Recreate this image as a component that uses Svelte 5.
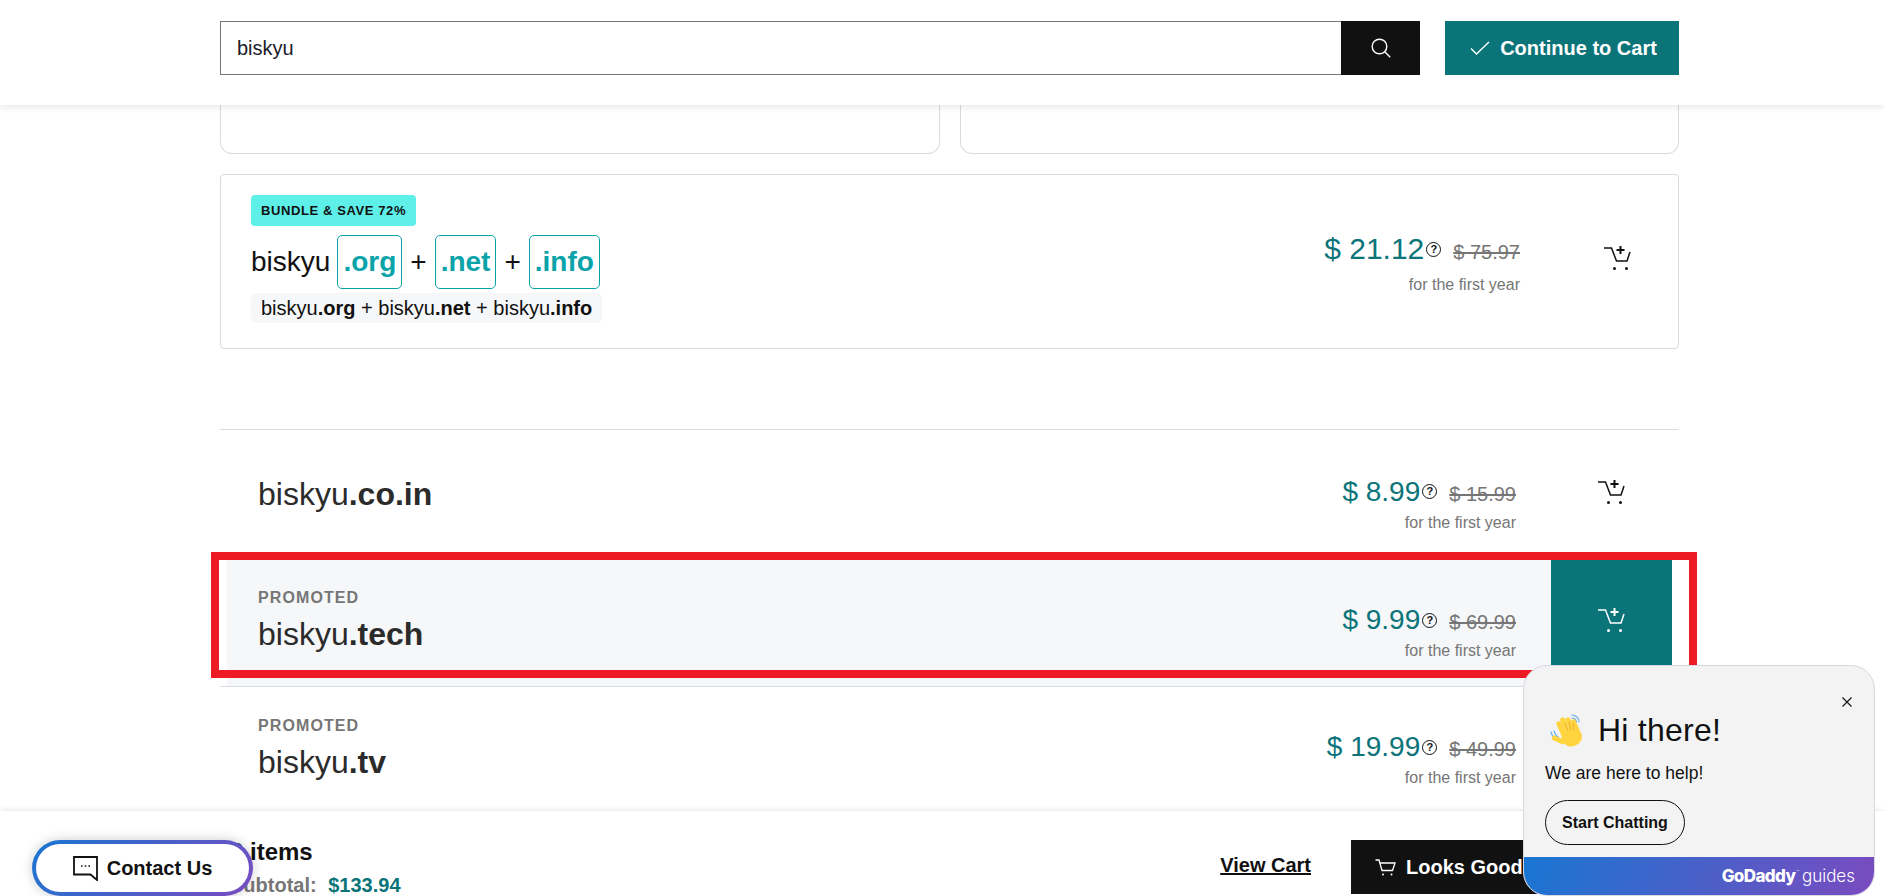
<script>
  const rows = [
    { name: 'co.in', price: '8.99', old: '15.99' },
    { name: 'tech', price: '9.99', old: '69.99', promoted: true, active: true },
    { name: 'tv', price: '19.99', old: '49.99', promoted: true }
  ];
  const bundle = ['org', 'net', 'info'];
</script>

<div class="page">
  <header class="topbar">
    <div class="search">
      <div class="search-input">biskyu</div>
      <button class="search-btn" aria-label="Search">
        <svg width="22" height="22" viewBox="0 0 22 22" fill="none" stroke="#fff" stroke-width="1.4">
          <circle cx="9.5" cy="9.5" r="7.3" />
          <path d="M14.8 14.8 L20.2 20.2" />
        </svg>
      </button>
    </div>
    <button class="continue">
      <svg width="20" height="14" viewBox="0 0 20 14" fill="none" stroke="#fff" stroke-width="1.4">
        <path d="M1 7.500 L6.500 13 L19 1" />
      </svg>
      Continue to Cart
    </button>
  </header>

  <main class="content">
    <div class="cut-cards">
      <div class="cut-card"></div>
      <div class="cut-card"></div>
    </div>

    <section class="bundle">
      <div class="bundle-left">
        <span class="badge">BUNDLE &amp; SAVE 72%</span>
        <div class="bundle-title">
          <span>biskyu</span>
          {#each bundle as tld, i}
            {#if i > 0}<span class="plus">+</span>{/if}
            <span class="tld" class:first={i === 0}>.{tld}</span>
          {/each}
        </div>
        <div class="bundle-sub">
          {#each bundle as tld, i}{i > 0 ? ' + ' : ''}biskyu<b>.{tld}</b>{/each}
        </div>
      </div>
      <div class="price-block bundle-price">
        <div class="price-line">
          <span class="price">$ 21.12</span>
          <span class="help">?</span>
          <s class="old">$ 75.97</s>
        </div>
        <div class="term">for the first year</div>
      </div>
      <div class="bundle-cart">
        <svg width="27" height="25" viewBox="0 0 27 25" fill="none" stroke="#111" stroke-width="1.5">
          <path d="M0 2 H7.500 L12.500 15 H23 L26 6" />
          <path d="M16.500 0 V8 M12.500 4 H20.500" stroke-width="2" />
          <circle cx="10.500" cy="22.500" r="1.500" fill="#111" stroke="none" />
          <circle cx="22.500" cy="22.500" r="1.500" fill="#111" stroke="none" />
        </svg>
      </div>
    </section>

    <div class="results">
      {#each rows as row}
        <div class="row" class:active={row.active}>
          <div class="domain">
            {#if row.promoted}<div class="promoted">PROMOTED</div>{/if}
            <div class="name">biskyu<b>.{row.name}</b></div>
          </div>
          <div class="price-block">
            <div class="price-line">
              <span class="price">$ {row.price}</span>
              <span class="help">?</span>
              <s class="old">$ {row.old}</s>
            </div>
            <div class="term">for the first year</div>
          </div>
          <div class="add">
            <svg width="27" height="25" viewBox="0 0 27 25" fill="none" stroke={row.active ? '#fff' : '#111'} stroke-width="1.5">
              <path d="M0 2 H7.500 L12.500 15 H23 L26 6" />
              <path d="M16.500 0 V8 M12.500 4 H20.500" stroke-width="2" />
              <circle cx="10.500" cy="22.500" r="1.500" fill={row.active ? '#fff' : '#111'} stroke="none" />
              <circle cx="22.500" cy="22.500" r="1.500" fill={row.active ? '#fff' : '#111'} stroke="none" />
            </svg>
          </div>
        </div>
        {#if row.active}<div class="divider"></div>{/if}
      {/each}
    </div>
  </main>

  <footer class="bottombar">
    <div class="summary">
      <div class="items">3 items</div>
      <div class="subtotal">Subtotal: <span>$133.94</span></div>
    </div>
    <div class="actions">
      <span class="view-cart">View Cart</span>
      <button class="looks-good">
        <svg width="21" height="17" viewBox="0 0 21 17" fill="none" stroke="#fff" stroke-width="1.3">
          <path d="M0.500 1 H4 L7 11.500 H17.500 L20 4 H5" />
          <circle cx="8" cy="15.500" r="1" fill="#fff" stroke="none" />
          <circle cx="16.500" cy="15.500" r="1" fill="#fff" stroke="none" />
        </svg>
        Looks Good
      </button>
    </div>
  </footer>

  <!-- red annotation drawn over the screenshot -->
  <div class="highlight"></div>

  <button class="contact">
    <span class="contact-inner">
      <svg width="25" height="25" viewBox="0 0 25 25" fill="none" stroke="#111" stroke-width="1.8">
        <path d="M1 1 H24 V24 L17.500 18.500 H1 Z" />
        <path d="M8 10 h1.600 M11.700 10 h1.600 M15.400 10 h1.600" stroke-width="1.600" />
      </svg>
      Contact Us
    </span>
  </button>

  <aside class="chat">
    <button class="chat-close" aria-label="Close">
      <svg width="10" height="10" viewBox="0 0 10 10" stroke="#111" stroke-width="1.100">
        <path d="M0.500 0.500 L9.500 9.500 M9.500 0.500 L0.500 9.500" />
      </svg>
    </button>
    <div class="chat-body">
      <div class="chat-title">
        <svg width="34" height="34" viewBox="0 0 34 34">
          <g fill="none" stroke="#6ab0e8" stroke-width="1.200" stroke-linecap="round">
            <path d="M22 2 C26 2 29 5 29 9" />
            <path d="M22 5 C24.500 5 26 7 26.500 9" />
            <path d="M1 19 C2 23 4 26 8 27" />
            <path d="M4 18 C5 21 6 23 8.500 24" />
          </g>
          <g fill="#ffd43f" transform="rotate(-24 19 20)">
            <rect x="11" y="5" width="5" height="18" rx="2.500" />
            <rect x="16" y="3" width="5" height="20" rx="2.500" />
            <rect x="21" y="5" width="5" height="18" rx="2.500" />
            <rect x="25.500" y="9" width="4.500" height="15" rx="2.250" />
            <rect x="4" y="15" width="5" height="14" rx="2.500" transform="rotate(-42 6.500 22)" />
            <rect x="10" y="15" width="20" height="19" rx="9" />
          </g>
          <g fill="none" stroke="#e8a93a" stroke-width=".8" stroke-linecap="round">
            <path d="M15 10 L18 18 M19 9 L21 17 M23 10 L24 17" />
          </g>
        </svg>
        <span>Hi there!</span>
      </div>
      <p>We are here to help!</p>
      <button class="chat-start">Start Chatting</button>
    </div>
    <div class="chat-foot"><b>GoDaddy</b><sup>™</sup><span>guides</span></div>
  </aside>
</div>

<style>
  :global(body) { margin: 0; background: #fff; }

  .page {
    position: relative;
    display: flex;
    flex-direction: column;
    height: 896px;
    overflow: hidden;
    font-family: "Liberation Sans", Arial, sans-serif;
    color: #111;
  }
  button { font-family: inherit; border: 0; padding: 0; cursor: pointer; }

  .topbar {
    position: relative;
    z-index: 2;
    flex: none;
    box-sizing: border-box;
    height: 105px;
    padding: 21px 205px 0 220px;
    display: flex;
    align-items: flex-start;
    gap: 25px;
    background: #fff;
    box-shadow: 0 2px 8px rgba(0,0,0,.1);
  }
  .search { display: flex; flex: 1; height: 54px; }
  .search-input {
    flex: 1;
    box-sizing: border-box;
    border: 1px solid #767676;
    border-right: 0;
    padding-left: 16px;
    font-size: 20px;
    line-height: 52px;
    color: #1b1b2a;
  }
  .search-btn { width: 79px; background: #111; display: flex; align-items: center; justify-content: center; }
  .continue {
    width: 234px;
    height: 54px;
    padding-left: 3px;
    background: #0b7479;
    color: #fff;
    font-size: 20px;
    font-weight: 700;
    display: flex;
    align-items: center;
    justify-content: center;
    gap: 10px;
  }

  .content { flex: 1; min-height: 0; padding: 0 205px 0 220px; }
  .cut-cards { display: flex; gap: 20px; }
  .cut-card {
    flex: 1;
    box-sizing: border-box;
    height: 49px;
    border: 1px solid #d6dbe2;
    border-top: 0;
    border-radius: 0 0 12px 12px;
  }

  .bundle {
    box-sizing: border-box;
    height: 175px;
    margin-top: 20px;
    padding: 20px 0 0 30px;
    border: 1px solid #d6dbe2;
    border-radius: 4px;
    display: flex;
  }
  .bundle-left { flex: 1; }
  .badge {
    display: block;
    width: fit-content;
    box-sizing: border-box;
    height: 31px;
    padding: 0 10px;
    background: #5eefe9;
    border-radius: 4px;
    font-size: 13px;
    font-weight: 700;
    line-height: 31px;
    letter-spacing: .6px;
  }
  .bundle-title {
    display: flex;
    align-items: center;
    margin-top: 9px;
    height: 54px;
    font-size: 28px;
  }
  .tld {
    box-sizing: border-box;
    height: 54px;
    padding: 0 5px;
    border: 1px solid #09a3a9;
    border-radius: 5px;
    color: #09a3a9;
    font-weight: 700;
    line-height: 52px;
  }
  .tld.first { margin-left: 7px; }
  .plus { margin: 0 8px; }
  .bundle-sub {
    width: fit-content;
    margin-top: 4px;
    height: 30px;
    padding: 0 10px;
    background: #f5f7f8;
    border-radius: 5px;
    font-size: 20px;
    line-height: 30px;
    white-space: pre-wrap;
  }

  .price-block { text-align: right; padding-top: 20px; margin-right: 35px; }
  .price-line { display: flex; align-items: baseline; justify-content: flex-end; height: 34px; line-height: 34px; }
  .price { font-size: 28px; color: #0b7479; }
  .help {
    box-sizing: border-box;
    width: 15px;
    height: 15px;
    margin-left: 2px;
    border: 1.5px solid #111;
    border-radius: 50%;
    font-size: 11px;
    font-weight: 700;
    line-height: 12px;
    text-align: center;
    align-self: center;
  }
  .old { margin-left: 12px; font-size: 20px; color: #767676; text-decoration-thickness: 2px; }
  .term { margin-top: 4px; font-size: 16px; line-height: 20px; color: #767676; }

  .bundle-price { padding-top: 37px; margin-right: 0; }
  .bundle-price .price { font-size: 30px; }
  .bundle-price .term { margin-top: 9px; }
  .bundle-cart { width: 158px; box-sizing: border-box; padding: 51px 0 0 84px; }

  .results { margin-top: 80px; border-top: 1px solid #d8dbe0; }
  .row {
    box-sizing: border-box;
    height: 127px;
    margin: 0 7px;
    padding-left: 31px;
    display: flex;
    align-items: center;
  }
  .domain { flex: 1; }
  .promoted { font-size: 16px; font-weight: 700; letter-spacing: 1.1px; color: #767676; line-height: 20px; margin-bottom: 6px; }
  .name { font-size: 32px; line-height: 40px; color: #2b2b2b; }
  .add {
    flex: none;
    box-sizing: border-box;
    width: 121px;
    height: 108px;
    align-self: flex-start;
    padding-top: 50px;
    display: flex;
    justify-content: center;
  }
  .row.active { height: 129px; background: #f5f7f8; align-items: flex-start; }
  .row.active .domain { padding-top: 31px; }
  .row.active .price-block { padding-top: 46px; }
  .row.active .add { background: #0b7479; padding-top: 51px; }
  .divider { height: 1px; background: #d8dbe0; }
  .divider + .row { height: 124px; }

  .bottombar {
    position: relative;
    z-index: 2;
    flex: none;
    box-sizing: border-box;
    height: 85px;
    padding: 0 0 0 230px;
    display: flex;
    justify-content: space-between;
    background: #fff;
    box-shadow: 0 -1px 5px rgba(0,0,0,.1);
  }
  .summary { padding-top: 27px; }
  .items { font-size: 24px; font-weight: 700; line-height: 28px; }
  .subtotal { margin-top: 7px; font-size: 20px; font-weight: 700; line-height: 24px; color: #767676; white-space: pre; }
  .subtotal span { color: #0b7479; margin-left: 6px; }
  .actions { display: flex; align-items: flex-start; padding-top: 29px; padding-right: 324px; }
  .view-cart { margin-top: 14px; font-size: 20px; font-weight: 700; text-decoration: underline; }
  .looks-good {
    width: 209px;
    height: 54px;
    margin-left: 40px;
    padding-left: 24px;
    background: #111;
    color: #fff;
    font-size: 20px;
    font-weight: 700;
    display: flex;
    align-items: center;
    gap: 10px;
  }

  .highlight {
    position: absolute;
    z-index: 3;
    left: 211px;
    top: 552px;
    box-sizing: border-box;
    width: 1486px;
    height: 126px;
    border: 8px solid #ed1c24;
  }

  .contact {
    position: absolute;
    z-index: 4;
    left: 32px;
    top: 840px;
    width: 221px;
    height: 56px;
    padding: 4px;
    border-radius: 28px;
    background: linear-gradient(135deg, #1976d2, #7a4bc0);
    box-shadow: 0 0 12px rgba(0,0,0,.2);
  }
  .contact-inner {
    display: flex;
    align-items: center;
    justify-content: center;
    gap: 9px;
    height: 100%;
    border-radius: 24px;
    background: #fff;
    color: #111;
    font-size: 20px;
    font-weight: 700;
  }

  .chat {
    position: absolute;
    z-index: 4;
    left: 1523px;
    top: 665px;
    box-sizing: border-box;
    width: 352px;
    height: 231px;
    display: flex;
    flex-direction: column;
    border: 1px solid #d6d9e2;
    border-radius: 24px;
    background: #f3f3f4;
    overflow: hidden;
  }
  .chat-close {
    position: absolute;
    top: 31px;
    right: 22px;
    width: 10px;
    height: 10px;
    background: none;
    display: flex;
  }
  .chat-body { flex: 1; padding: 47px 0 0 21px; }
  .chat-title { display: flex; align-items: center; gap: 14px; font-size: 32px; letter-spacing: .25px; line-height: 34px; margin-left: 5px; color: #111; }
  .chat p { margin: 16px 0 0; font-size: 17.5px; line-height: 20px; color: #111; }
  .chat-start {
    display: block;
    width: 140px;
    height: 45px;
    margin-top: 17px;
    border: 1.5px solid #111;
    border-radius: 23px;
    background: transparent;
    color: #111;
    font-size: 16px;
    font-weight: 700;
  }
  .chat-foot {
    flex: none;
    height: 38px;
    box-sizing: border-box;
    padding-right: 19px;
    background: linear-gradient(110deg, #1976d2, #7a4bc0);
    color: #fff;
    display: flex;
    align-items: center;
    justify-content: flex-end;
    font-family: Inter, "Liberation Sans", sans-serif;
    font-size: 17px;
  }
  .chat-foot b { font-weight: 800; letter-spacing: -.6px; }
  .chat-foot sup { font-size: 4px; margin: 0 3px 8px 1px; line-height: 1; }
  .chat-foot span { font-weight: 300; }
</style>
